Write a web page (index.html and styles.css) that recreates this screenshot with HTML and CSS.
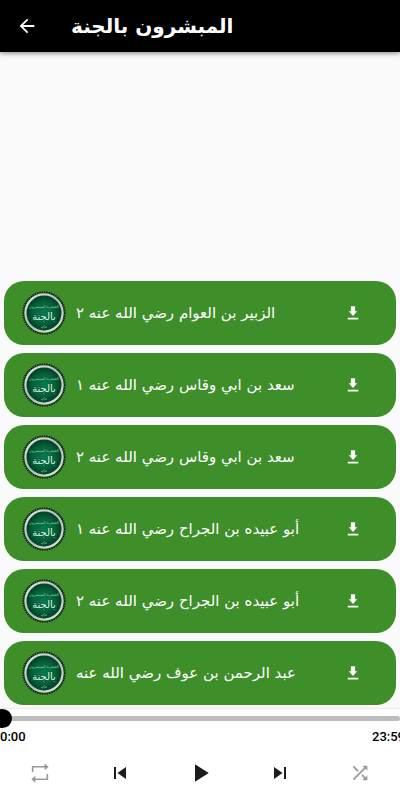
FILE: index.html
```html
<!DOCTYPE html>
<html lang="ar">
<head>
<meta charset="utf-8">
<meta name="viewport" content="width=device-width, initial-scale=1">
<title>المبشرون بالجنة</title>
<link rel="stylesheet" href="styles.css">
</head>
<body>
<svg class="sprite" aria-hidden="true">
  <defs>
    <radialGradient id="emblem-fill">
      <stop offset="0" stop-color="#0b7a4c"/>
      <stop offset="0.6" stop-color="#056039"/>
      <stop offset="1" stop-color="#02391f"/>
    </radialGradient>
    <linearGradient id="emblem-ring" x1="0" y1="0" x2="1" y2="1">
      <stop offset="0" stop-color="#e4ebe8"/>
      <stop offset="0.5" stop-color="#a9b9b4"/>
      <stop offset="1" stop-color="#dfe8e4"/>
    </linearGradient>
  </defs>
  <symbol id="emblem" viewBox="0 0 44 44">
    <circle cx="22" cy="22" r="20.5" fill="#0d2414"/>
    <circle cx="22" cy="22" r="21" fill="none" stroke="#0d2414" stroke-width="1.600" stroke-dasharray="1.300 1.100"/>
    <circle cx="22" cy="22" r="18.6" fill="url(#emblem-fill)" stroke="url(#emblem-ring)" stroke-width="2.200"/>
    <text class="emblem-small" x="22" y="17" text-anchor="middle">العشرة المبشرون</text>
    <text class="emblem-large" x="22" y="29" text-anchor="middle">بالجنة</text>
    <path d="M19 36.500q1.500 1 2.500-.5l1-1.500m0 2q1.500.5 2.500-1" fill="none" stroke="#8fd0ae" stroke-width=".7"/>
  </symbol>
  <symbol id="download" viewBox="0 0 24 24"><path d="M17.600 9.500H14.800V3H9.200v6.500H6.400L12 16zM5 18.300v2.200h14v-2.200H5z"/></symbol>
</svg>
<div class="app">
  <header class="bar">
    <button class="back" type="button" aria-label="رجوع">
      <svg viewBox="0 0 24 24"><path d="M20 11H7.830l5.590-5.590L12 4l-8 8 8 8 1.410-1.410L7.830 13H20v-2z"/></svg>
    </button>
    <h1 dir="rtl">المبشرون بالجنة</h1>
  </header>
  <main class="list">
    <article class="track">
      <svg class="emblem"><use href="#emblem"/></svg>
      <p class="name"><bdi dir="rtl">الزبير بن العوام رضي الله عنه ٢</bdi></p>
      <button class="save" type="button" aria-label="تحميل"><svg><use href="#download"/></svg></button>
    </article>
    <article class="track">
      <svg class="emblem"><use href="#emblem"/></svg>
      <p class="name"><bdi dir="rtl">سعد بن ابي وقاس رضي الله عنه ١</bdi></p>
      <button class="save" type="button" aria-label="تحميل"><svg><use href="#download"/></svg></button>
    </article>
    <article class="track">
      <svg class="emblem"><use href="#emblem"/></svg>
      <p class="name"><bdi dir="rtl">سعد بن ابي وقاس رضي الله عنه ٢</bdi></p>
      <button class="save" type="button" aria-label="تحميل"><svg><use href="#download"/></svg></button>
    </article>
    <article class="track">
      <svg class="emblem"><use href="#emblem"/></svg>
      <p class="name"><bdi dir="rtl">أبو عبيده بن الجراح رضي الله عنه ١</bdi></p>
      <button class="save" type="button" aria-label="تحميل"><svg><use href="#download"/></svg></button>
    </article>
    <article class="track">
      <svg class="emblem"><use href="#emblem"/></svg>
      <p class="name"><bdi dir="rtl">أبو عبيده بن الجراح رضي الله عنه ٢</bdi></p>
      <button class="save" type="button" aria-label="تحميل"><svg><use href="#download"/></svg></button>
    </article>
    <article class="track">
      <svg class="emblem"><use href="#emblem"/></svg>
      <p class="name"><bdi dir="rtl">عبد الرحمن بن عوف رضي الله عنه</bdi></p>
      <button class="save" type="button" aria-label="تحميل"><svg><use href="#download"/></svg></button>
    </article>
  </main>
  <footer class="player">
    <input class="seek" type="range" min="0" max="1439" value="0" aria-label="موضع التشغيل">
    <div class="times"><span>0:00</span><span>23:59</span></div>
    <div class="controls">
      <button class="muted" type="button" aria-label="تكرار"><svg viewBox="0 0 24 24"><path d="M4 11V5.200h14M20 13v5.800H6" fill="none" stroke="currentColor" stroke-width="1.800"/><path d="M17 1.500v7.400l4.500-3.700zM7 15.100v7.400l-4.500-3.700z"/></svg></button>
      <button type="button" aria-label="السابق"><svg viewBox="0 0 24 24"><path d="M6 6h2v12H6zm3.500 6l8.500 6V6z"/></svg></button>
      <button class="play" type="button" aria-label="تشغيل"><svg viewBox="0 0 24 24"><path d="M8 5v14l11-7z"/></svg></button>
      <button type="button" aria-label="التالي"><svg viewBox="0 0 24 24"><path d="M6 18l8.500-6L6 6v12zM16 6v12h2V6h-2z"/></svg></button>
      <button class="muted" type="button" aria-label="عشوائي"><svg viewBox="0 0 24 24"><path d="M10.590 9.170L5.410 4 4 5.410l5.170 5.170 1.420-1.410zM14.500 4l2.040 2.040L4 18.590 5.410 20 17.960 7.460 20 9.500V4h-5.500zm.33 9.410l-1.410 1.410 3.130 3.130L14.500 20H20v-5.500l-2.040 2.040-3.130-3.130z"/></svg></button>
    </div>
  </footer>
</div>
</body>
</html>
```
FILE: styles.css
```css
* {
  box-sizing: border-box;
}

body {
  margin: 0;
  background: #fafafa;
  font-family: "DejaVu Sans", sans-serif;
}

button {
  display: flex;
  align-items: center;
  justify-content: center;
  padding: 0;
  border: 0;
  background: none;
  color: inherit;
}

svg {
  display: block;
  fill: currentColor;
}

.sprite {
  position: absolute;
  width: 0;
  height: 0;
}

.app {
  display: flex;
  flex-direction: column;
  min-height: 100vh;
  overflow: hidden;
}

.bar {
  display: flex;
  align-items: center;
  gap: 30px;
  height: 52px;
  padding: 0 13px;
  background: #000;
  color: #fff;
  box-shadow: 0 1px 5px rgba(0, 0, 0, 0.5);
}

.back {
  width: 28px;
  height: 44px;
}

.back svg {
  width: 22px;
  height: 22px;
}

.bar h1 {
  margin: 0;
  font-size: 20px;
  line-height: 32px;
  font-weight: 700;
  white-space: nowrap;
}

.list {
  flex: 1;
  display: flex;
  flex-direction: column;
  justify-content: flex-end;
  gap: 8px;
  padding: 8px 4px 4px;
}

.track {
  display: flex;
  align-items: center;
  height: 64px;
  padding: 0 26px 0 18px;
  border-radius: 20px;
  background: #3e8e2a;
  color: #fff;
}

.emblem {
  flex: none;
  width: 44px;
  height: 44px;
}

.emblem-small,
.emblem-large {
  font-family: "DejaVu Sans", sans-serif;
  fill: #8fd0ae;
}

.emblem-small {
  font-size: 4px;
}

.emblem-large {
  font-size: 10px;
  fill: #d5f0e0;
}

.name {
  flex: 1;
  min-width: 0;
  margin: 0;
  padding-left: 10px;
  font-size: 15px;
  line-height: 24px;
  text-align: left;
  white-space: nowrap;
}

.save {
  flex: none;
  width: 34px;
  height: 44px;
}

.save svg {
  width: 18px;
  height: 18px;
}

.player {
  height: 91px;
  background: #fff;
  box-shadow: 0 -1px 1px rgba(0, 0, 0, 0.06);
  color: #1c1c1c;
}

.seek {
  display: block;
  width: calc(100% + 7px);
  height: 19px;
  margin: 0 0 0 -7px;
  appearance: none;
  background: none;
}

.seek::-webkit-slider-runnable-track {
  height: 5px;
  border-radius: 3px;
  background: #bdbdbd;
}

.seek::-webkit-slider-thumb {
  appearance: none;
  width: 19px;
  height: 19px;
  margin-top: -7px;
  border-radius: 50%;
  background: #000;
}

.times {
  display: flex;
  justify-content: space-between;
  margin-right: -5px;
  color: #000;
  font-family: Roboto, sans-serif;
  font-size: 13px;
  line-height: 18px;
  font-weight: 500;
}

.controls {
  display: grid;
  grid-template-columns: repeat(5, 1fr);
  align-items: center;
  height: 54px;
}

.controls button {
  height: 44px;
}

.controls svg {
  width: 24px;
  height: 24px;
}

.controls .muted {
  color: #9a9a9a;
}

.controls .muted svg {
  width: 22px;
  height: 22px;
}

.controls .play svg {
  width: 30px;
  height: 30px;
}
```
